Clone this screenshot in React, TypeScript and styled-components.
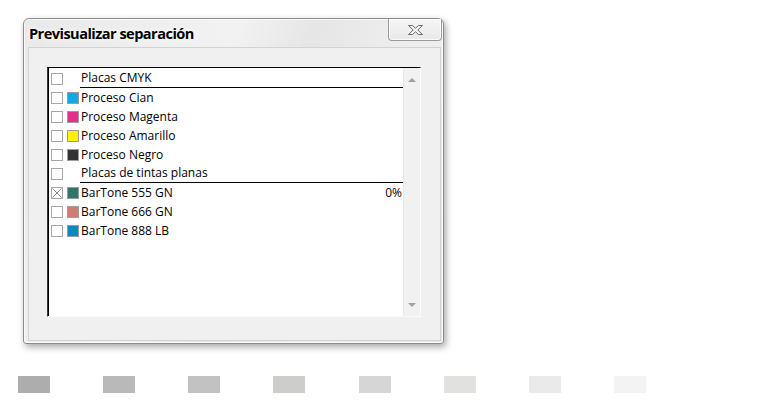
import styled, { createGlobalStyle } from 'styled-components';

const GlobalStyle = createGlobalStyle`
  html, body {
    margin: 0;
    padding: 0;
    background: #ffffff;
  }
  body {
    font-family: "Open Sans", "Liberation Sans", sans-serif;
  }
`;

const Page = styled.div`
  display: flex;
  flex-direction: column;
  align-items: flex-start;
  padding-top: 18px;
`;

const Window = styled.div`
  margin-left: 23px;
  width: 421px;
  height: 326px;
  box-sizing: border-box;
  display: flex;
  flex-direction: column;
  border: 1px solid #8c8c8c;
  border-radius: 6px 6px 3px 3px;
  background: linear-gradient(110deg, #e9e9e9 0%, #f2f2f2 40%, #e6e6e6 55%, #efefef 75%, #e8e8e8 100%);
  box-shadow: 2px 3px 7px rgba(0, 0, 0, 0.35), inset 0 0 0 1px #fafafa;
`;

const TitleBar = styled.div`
  height: 28px;
  display: flex;
  justify-content: space-between;
  align-items: flex-start;
`;

const Title = styled.div`
  padding: 4px 0 0 5px;
  font-size: 14.6px;
  line-height: 20px;
  font-weight: 700;
  color: #000;
  letter-spacing: -0.55px;
  text-shadow: 0 0 6px #ffffff, 0 0 3px #ffffff;
`;

const CloseButton = styled.div`
  width: 54px;
  height: 22px;
  margin-right: 1px;
  box-sizing: border-box;
  display: flex;
  align-items: center;
  justify-content: center;
  border: 1px solid #9a9a9a;
  border-top: none;
  border-radius: 0 0 4px 4px;
  background: linear-gradient(#f6f6f6, #e8e8e8);
  box-shadow: inset 0 0 0 1px rgba(255, 255, 255, 0.8);
`;

const Client = styled.div`
  flex: 1;
  margin: 0 2px 2px 4px;
  padding: 19px 19px 23px 18px;
  border: 1px solid #d2d2d2;
  background: #f0f0f0;
  display: flex;
`;

const ListBox = styled.div`
  flex: 1;
  height: 250px;
  box-sizing: border-box;
  display: flex;
  background: #fff;
  border-top: 1px solid #000;
  border-left: 1px solid #3a3a3a;
  border-right: 1px solid #fbfbfb;
  border-bottom: 1px solid #fbfbfb;
  box-shadow: inset 1px 0 0 #000;
`;

const Rows = styled.div`
  flex: 1;
  padding-top: 1px;
  display: flex;
  flex-direction: column;
`;

const Row = styled.div`
  height: 19px;
  display: flex;
  align-items: center;
  padding-left: 3px;
  font-size: 12px;
  color: #000;
`;

const Check = styled.div`
  width: 12px;
  height: 12px;
  box-sizing: border-box;
  border: 1px solid #a7a7a7;
  background: #fff;
  display: flex;
  flex-shrink: 0;
`;

const Swatch = styled.div<{ $color?: string }>`
  width: 12px;
  height: 12px;
  margin-left: 4px;
  box-sizing: border-box;
  flex-shrink: 0;
  border: ${(p) => (p.$color ? '1px solid #9c9c9c' : 'none')};
  background: ${(p) => p.$color ?? 'transparent'};
`;

const Label = styled.div<{ $header?: boolean }>`
  flex: 1;
  height: 19px;
  box-sizing: border-box;
  margin-left: 1px;
  padding: 0 1px 0 1px;
  display: flex;
  align-items: center;
  justify-content: space-between;
  line-height: 18px;
  border-bottom: ${(p) => (p.$header ? '1px solid #000' : 'none')};
`;

const Scrollbar = styled.div`
  width: 17px;
  display: flex;
  flex-direction: column;
  justify-content: space-between;
  align-items: center;
  padding: 10px 0 9px;
  box-sizing: border-box;
  background: #f1f1f1;
  border-left: 1px solid #e8e8e8;
`;

const Arrow = styled.div<{ $down?: boolean }>`
  width: 0;
  height: 0;
  border-left: 4px solid transparent;
  border-right: 4px solid transparent;
  ${(p) => (p.$down ? 'border-top: 4px solid #a0a0a0;' : 'border-bottom: 4px solid #a0a0a0;')}
`;

const SwatchRow = styled.div`
  display: flex;
  gap: 53.15px;
  margin: 32px 0 0 18px;
`;

const ShadeBlock = styled.div<{ $shade: string }>`
  width: 32px;
  height: 17px;
  background: ${(p) => p.$shade};
`;

type Item = { label: string; color?: string; header?: boolean; checked?: boolean; value?: string };

const items: Item[] = [
  { label: 'Placas CMYK', header: true },
  { label: 'Proceso Cian', color: '#0eaae6' },
  { label: 'Proceso Magenta', color: '#e4308a' },
  { label: 'Proceso Amarillo', color: '#fff000' },
  { label: 'Proceso Negro', color: '#333333' },
  { label: 'Placas de tintas planas', header: true },
  { label: 'BarTone 555 GN', color: '#2f7568', checked: true, value: '0%' },
  { label: 'BarTone 666 GN', color: '#d37a73' },
  { label: 'BarTone 888 LB', color: '#0b87c2' },
];

const shades = ['#adadad', '#b9b9b9', '#c2c2c2', '#cdcdcb', '#d6d6d6', '#e1e1df', '#eaeaea', '#f3f3f3'];

function CloseGlyph() {
  return (
    <svg width="17" height="12" viewBox="0 0 17 12">
      <path
        d="M1.5 1.5 H5.5 L8.5 4.2 L11.5 1.5 H15.5 L10.8 6 L15.5 10.5 H11.5 L8.5 7.8 L5.5 10.5 H1.5 L6.2 6 Z"
        fill="#f4f4f4"
        stroke="#6a6a6a"
        strokeWidth="1"
        strokeLinejoin="round"
      />
    </svg>
  );
}

function CrossMark() {
  return (
    <svg width="10" height="10" viewBox="0 0 10 10">
      <path d="M0.5 0.5 L9.5 9.5 M9.5 0.5 L0.5 9.5" stroke="#8a8a8a" strokeWidth="1" />
    </svg>
  );
}

export default function App() {
  return (
    <>
      <GlobalStyle />
      <Page>
        <Window>
          <TitleBar>
            <Title>Previsualizar separación</Title>
            <CloseButton>
              <CloseGlyph />
            </CloseButton>
          </TitleBar>
          <Client>
            <ListBox>
              <Rows>
                {items.map((it) => (
                  <Row key={it.label}>
                    <Check>{it.checked && <CrossMark />}</Check>
                    <Swatch $color={it.color} />
                    <Label $header={it.header}>
                      <span>{it.label}</span>
                      {it.value && <span>{it.value}</span>}
                    </Label>
                  </Row>
                ))}
              </Rows>
              <Scrollbar>
                <Arrow />
                <Arrow $down />
              </Scrollbar>
            </ListBox>
          </Client>
        </Window>
        <SwatchRow>
          {shades.map((s) => (
            <ShadeBlock key={s} $shade={s} />
          ))}
        </SwatchRow>
      </Page>
    </>
  );
}
